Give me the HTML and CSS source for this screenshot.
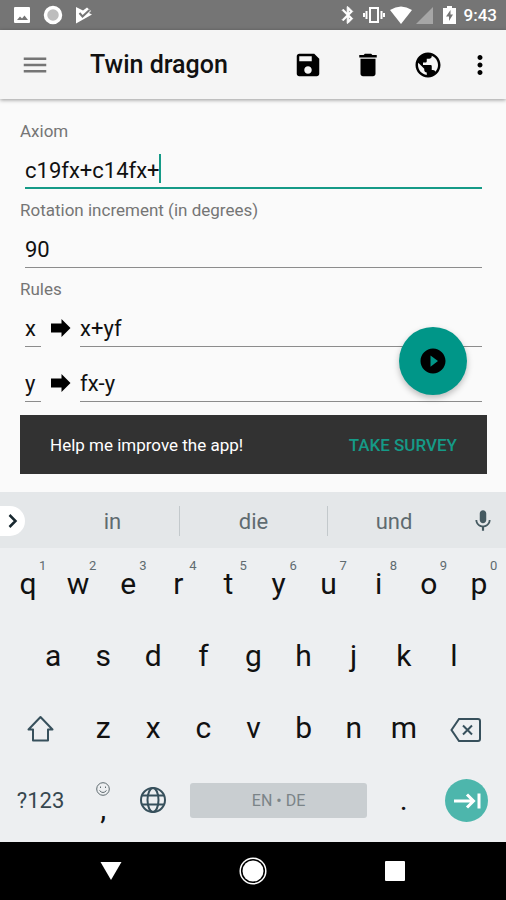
FILE: index.html
```html
<!DOCTYPE html>
<html lang="en">
<head>
<meta charset="utf-8">
<meta name="viewport" content="width=device-width, initial-scale=1">
<title>Twin dragon</title>
<link rel="stylesheet" href="styles.css">
</head>
<body>
<div class="status">
  <svg width="18" height="18" viewBox="0 0 18 18"><rect x="1" y="1" width="16" height="16" rx="1" fill="#fff"/><path d="M4 14l3-3.500 2 2 2.500-3 3.500 4.500z" fill="#757575"/></svg>
  <svg width="20" height="20" viewBox="0 0 20 20"><circle cx="10" cy="10" r="7.500" fill="#bdbdbd" stroke="#fff" stroke-width="3.500"/></svg>
  <svg width="18" height="18" viewBox="0 0 18 18"><path d="M1 1l7 3.500 4-3 4 3.500-2 2 3 1.500L1 17.500z" fill="#fff"/><path d="M4.500 7l3 3.500 7-6.500" fill="none" stroke="#757575" stroke-width="2"/></svg>
  <div class="status-right">
    <svg width="20" height="20" viewBox="0 0 24 24" fill="#fff"><path d="M17.710 7.710L12 2h-1v7.590L6.410 5 5 6.410 10.590 12 5 17.590 6.410 19 11 14.410V22h1l5.710-5.710-4.300-4.290 4.300-4.290zM13 5.830l1.880 1.880L13 9.590V5.830zm1.880 10.460L13 18.170v-3.760l1.880 1.880z" stroke="#fff"/></svg>
    <svg width="24" height="22" viewBox="0 0 24 22" fill="#fff"><path d="M1 9h2v4H1zM21 9h2v4h-2zM3.500 7h2v8h-2zM18.500 7h2v8h-2z"/><rect x="8" y="4" width="8" height="14" fill="none" stroke="#fff" stroke-width="2"/></svg>
    <svg width="22" height="18" viewBox="0 0 22 18"><path d="M0 4Q11-3 22 4L11 18z" fill="#fff"/></svg>
    <svg width="17" height="17" viewBox="0 0 17 17"><path d="M17 0v17H0z" fill="#a6a6a6"/></svg>
    <svg class="battery" width="13" height="18" viewBox="0 0 13 18"><path d="M4 0h5v2h4v16H0V2h4z" fill="#fff"/><path d="M7.500 4L3 10.500h3V15l4-6.500H7.500z" fill="#757575"/></svg>
    <span class="clock">9:43</span>
  </div>
</div>

<header class="appbar">
  <button class="icon-btn menu" aria-label="Menu"><svg width="30" height="30" viewBox="0 0 24 24"><path d="M3 18h18v-2H3zm0-5h18v-2H3zm0-7v2h18V6z"/></svg></button>
  <h1>Twin dragon</h1>
  <button class="icon-btn" aria-label="Save"><svg width="30" height="30" viewBox="0 0 24 24"><path d="M17 3H5c-1.110 0-2 .9-2 2v14c0 1.100.89 2 2 2h14c1.100 0 2-.9 2-2V7l-4-4zm-5 16c-1.660 0-3-1.340-3-3s1.340-3 3-3 3 1.340 3 3-1.340 3-3 3zm3-10H5V5h10v4z"/></svg></button>
  <button class="icon-btn" aria-label="Delete"><svg width="30" height="30" viewBox="0 0 24 24"><path d="M6 19c0 1.100.9 2 2 2h8c1.100 0 2-.9 2-2V7H6v12zM19 4h-3.500l-1-1h-5l-1 1H5v2h14V4z"/></svg></button>
  <button class="icon-btn" aria-label="Publish"><svg width="30" height="30" viewBox="0 0 24 24"><path d="M12 2C6.480 2 2 6.480 2 12s4.480 10 10 10 10-4.480 10-10S17.520 2 12 2zm-1 17.930c-3.950-.49-7-3.850-7-7.930 0-.62.08-1.210.21-1.790L9 15v1c0 1.100.9 2 2 2v1.930zm6.900-2.540c-.26-.81-1-1.390-1.900-1.390h-1v-3c0-.55-.45-1-1-1H8v-2h2c.55 0 1-.45 1-1V7h2c1.100 0 2-.9 2-2v-.41c2.930 1.190 5 4.060 5 7.410 0 2.080-.8 3.970-2.100 5.390z"/></svg></button>
  <button class="icon-btn more" aria-label="More options"><svg width="30" height="30" viewBox="0 0 24 24"><path d="M12 8c1.100 0 2-.9 2-2s-.9-2-2-2-2 .9-2 2 .9 2 2 2zm0 2c-1.100 0-2 .9-2 2s.9 2 2 2 2-.9 2-2-.9-2-2-2zm0 6c-1.100 0-2 .9-2 2s.9 2 2 2 2-.9 2-2-.9-2-2-2z"/></svg></button>
</header>

<main>
  <form>
    <label for="axiom">Axiom</label>
    <div class="field active"><input id="axiom" value="c19fx+c14fx+"><span class="caret"></span></div>
    <label for="rotation">Rotation increment (in degrees)</label>
    <div class="field"><input id="rotation" value="90"></div>
    <div class="label">Rules</div>
    <div class="field rule">
      <input class="symbol" aria-label="Symbol 1" value="x">
      <svg width="21" height="20" viewBox="0 0 21 20"><path d="M1 5.500h10.500V1L20.500 10l-9 9v-4.500H1z"/></svg>
      <input aria-label="Replacement 1" value="x+yf">
    </div>
    <div class="field rule">
      <input class="symbol" aria-label="Symbol 2" value="y">
      <svg width="21" height="20" viewBox="0 0 21 20"><path d="M1 5.500h10.500V1L20.500 10l-9 9v-4.500H1z"/></svg>
      <input aria-label="Replacement 2" value="fx-y">
    </div>
  </form>
  <div class="snackbar"><span>Help me improve the app!</span><button>TAKE SURVEY</button></div>
  <button class="fab" aria-label="Play"><svg width="30" height="30" viewBox="0 0 24 24"><path d="M12 2C6.480 2 2 6.480 2 12s4.480 10 10 10 10-4.480 10-10S17.520 2 12 2zm-2 14.500v-9l6 4.500-6 4.500z"/></svg></button>
</main>

<section class="keyboard" aria-label="Keyboard">
  <div class="suggestions">
    <button class="expand" aria-label="Expand"><svg width="12" height="16" viewBox="0 0 12 16"><path d="M2.500 2l6 6-6 6" fill="none" stroke="#182830" stroke-width="2.500"/></svg></button>
    <button>in</button>
    <button>die</button>
    <button>und</button>
    <button class="mic" aria-label="Voice input"><svg width="26" height="26" viewBox="0 0 24 24" fill="#455a61"><path d="M12 14c1.660 0 3-1.340 3-3V5c0-1.660-1.340-3-3-3S9 3.340 9 5v6c0 1.660 1.340 3 3 3zm5.300-3c0 3-2.540 5.100-5.300 5.100S6.700 14 6.700 11H5c0 3.410 2.720 6.230 6 6.720V21h2v-3.280c3.280-.48 6-3.300 6-6.720h-1.700z"/></svg></button>
  </div>
  <div class="keys">
    <button>q<sup>1</sup></button><button>w<sup>2</sup></button><button>e<sup>3</sup></button><button>r<sup>4</sup></button><button>t<sup>5</sup></button><button>y<sup>6</sup></button><button>u<sup>7</sup></button><button>i<sup>8</sup></button><button>o<sup>9</sup></button><button>p<sup>0</sup></button>
    <button class="row-start">a</button><button>s</button><button>d</button><button>f</button><button>g</button><button>h</button><button>j</button><button>k</button><button>l</button>
    <button class="wide first" aria-label="Shift"><svg width="30" height="32" viewBox="0 0 30 32"><path d="M14.500 6L2.500 18.500h4.500V29.500h15V18.500h4.500z" stroke-linejoin="round"/></svg></button><button>z</button><button>x</button><button>c</button><button>v</button><button>b</button><button>n</button><button>m</button><button class="wide" aria-label="Backspace"><svg width="34" height="32" viewBox="0 0 34 32"><path d="M10 8H29q2 0 2 2v18q0 2-2 2H10L2.500 19zM14 14.500l9 9M23 14.500l-9 9"/></svg></button>
    <button class="wide symbols">?123</button>
    <button class="comma"><svg width="16" height="16" viewBox="0 0 16 16"><circle cx="8" cy="8" r="6.300"/><path d="M4.500 9.500q3.500 4 7 0M5.500 5.500v1.500M10.500 5.500v1.500"/></svg><span>,</span></button>
    <button class="round" aria-label="Language"><svg width="28" height="28" viewBox="0 0 28 28"><circle cx="14" cy="14" r="12"/><ellipse cx="14" cy="14" rx="5.500" ry="12"/><path d="M3 9.500h22M3 18.500h22"/></svg></button>
    <button class="space">EN • DE</button>
    <button class="period">.</button>
    <button class="wide round enter" aria-label="Next"><svg width="43" height="43" viewBox="0 0 43 43"><circle cx="21.500" cy="21.500" r="21.500"/><path d="M9 22h19M22 15.500l6.500 6.500-6.500 6.500M34 14.500v15"/></svg></button>
  </div>
</section>

<nav>
  <button aria-label="Back"><svg width="22" height="20" viewBox="0 0 22 20"><path d="M.5 1h21L11 19z" fill="#fff"/></svg></button>
  <button aria-label="Home"><svg width="28" height="28" viewBox="0 0 28 28"><circle cx="14" cy="14" r="12.800" fill="none" stroke="#fff" stroke-width="1.500"/><circle cx="14" cy="14" r="10.500" fill="#fff"/></svg></button>
  <button aria-label="Recents"><svg width="20" height="20" viewBox="0 0 20 20"><rect width="20" height="20" rx="1" fill="#fff"/></svg></button>
</nav>
</body>
</html>
```
FILE: styles.css
```css
* { box-sizing: border-box; }

body {
  margin: 0;
  min-height: 100vh;
  display: flex;
  flex-direction: column;
  background: #fafafa;
  color: #000;
  font-family: Roboto, sans-serif;
}

button {
  margin: 0;
  padding: 0;
  border: 0;
  background: none;
  color: inherit;
  font: inherit;
}

svg { display: block; flex: none; }

/* Status bar */
.status {
  display: flex;
  align-items: center;
  gap: 12px;
  height: 30px;
  padding: 0 9px 0 13px;
  background: #757575;
}

.status-right {
  display: flex;
  align-items: center;
  gap: 4px;
  margin-left: auto;
}

.battery { margin: 0 4px 0 6px; }

.clock {
  color: #fff;
  font-size: 17px;
  font-weight: 500;
}

/* App bar */
.appbar {
  display: flex;
  align-items: center;
  height: 69px;
  padding-right: 4px;
  background: #f5f5f5;
  box-shadow: 0 1px 4px rgba(0, 0, 0, .4);
}

.icon-btn {
  display: flex;
  justify-content: center;
  align-items: center;
  width: 60px;
  height: 60px;
}

.menu { width: 70px; fill: #757575; }
.more { width: 44px; }

h1 {
  flex: 1;
  margin: 0 0 0 20px;
  color: #111;
  font-size: 25px;
  font-weight: 500;
}

/* Form */
main {
  position: relative;
  flex: 1;
  padding: 20px 19px 18px 20px;
}

label, .label {
  display: block;
  color: #757575;
  font-size: 17px;
  line-height: 24px;
}

.field {
  position: relative;
  display: flex;
  margin: 0 5px 9px;
}

input {
  flex: 1;
  min-width: 0;
  height: 46px;
  padding: 10px 0 0;
  border: 0;
  border-bottom: 1px solid #8c8c8c;
  outline: 0;
  background: none;
  color: #111;
  font: 22px Roboto, sans-serif;
}

.active input { border-bottom: 2px solid #159a87; }

.caret {
  position: absolute;
  left: 134px;
  top: 11px;
  width: 2px;
  height: 29px;
  background: #159a87;
}

.rule { align-items: center; gap: 9px; }
.rule svg { margin-top: 8px; }
.symbol { flex: 0 0 16px; }

.snackbar {
  display: flex;
  justify-content: space-between;
  align-items: center;
  height: 59px;
  margin-top: 13px;
  padding: 0 30px;
  background: #323232;
  color: #fff;
  font-size: 17px;
}

.snackbar button {
  color: #159a87;
  font-weight: 500;
}

.fab {
  position: absolute;
  right: 39px;
  bottom: 97px;
  display: flex;
  justify-content: center;
  align-items: center;
  width: 68px;
  height: 68px;
  border-radius: 50%;
  background: #009688;
  box-shadow: 0 3px 6px rgba(0, 0, 0, .25);
}

/* Keyboard */
.keyboard { background: #edeff1; }

.suggestions {
  display: grid;
  grid-template-columns: 46px 134fr 148fr 132fr 46px;
  align-items: center;
  height: 56px;
  padding-top: 2px;
  background: #e4e7e9;
  color: #5f6b70;
  font-size: 22px;
}

.suggestions button { height: 30px; }

.suggestions button:nth-child(2),
.suggestions button:nth-child(3) { border-right: 1px solid #c3c9cc; }

.suggestions .expand {
  display: flex;
  justify-content: flex-end;
  align-items: center;
  width: 25px;
  padding-right: 6px;
  border-radius: 0 15px 15px 0;
  background: #fff;
}

.suggestions .mic {
  display: flex;
  justify-content: center;
  align-items: center;
}

.keys {
  display: grid;
  grid-template-columns: repeat(20, 1fr);
  grid-auto-rows: 72px;
  padding: 0 2px 6px 3px;
  color: #111;
  font-size: 30px;
}

.keys button {
  position: relative;
  grid-column: span 2;
  display: flex;
  justify-content: center;
  align-items: center;
  padding-bottom: 2px;
}

.keys .row-start { grid-column: 2 / span 2; }
.keys .wide { grid-column: span 3; }
.keys .first { grid-column: 1 / span 3; }

.keys sup {
  position: absolute;
  top: 10px;
  left: 36px;
  color: #5f6b70;
  font-size: 13px;
  line-height: 16px;
}

.keys svg {
  fill: none;
  stroke: #37505c;
  stroke-width: 2;
}

.keys .symbols {
  padding: 0;
  color: #37474f;
  font-size: 22px;
}

.keys .comma {
  flex-direction: column;
  justify-content: flex-start;
  padding-top: 17px;
  line-height: 24px;
}

.comma svg { stroke: #5f6b70; stroke-width: 1; }

.keys .space {
  grid-column: span 8;
  align-self: center;
  height: 35px;
  margin: 0 12px;
  padding: 0;
  border-radius: 3px;
  background: #c9ced1;
  color: #7b8488;
  font-size: 16px;
}

.keys .round { padding: 0; }
.enter circle { fill: #4db6ac; stroke: none; }
.enter path { stroke: #fff; stroke-width: 3; }

/* Navigation bar */
nav {
  display: grid;
  grid-template-columns: repeat(3, 1fr);
  height: 58px;
  padding: 0 40px;
  background: #000;
}

nav button {
  display: flex;
  justify-content: center;
  align-items: center;
}
```
